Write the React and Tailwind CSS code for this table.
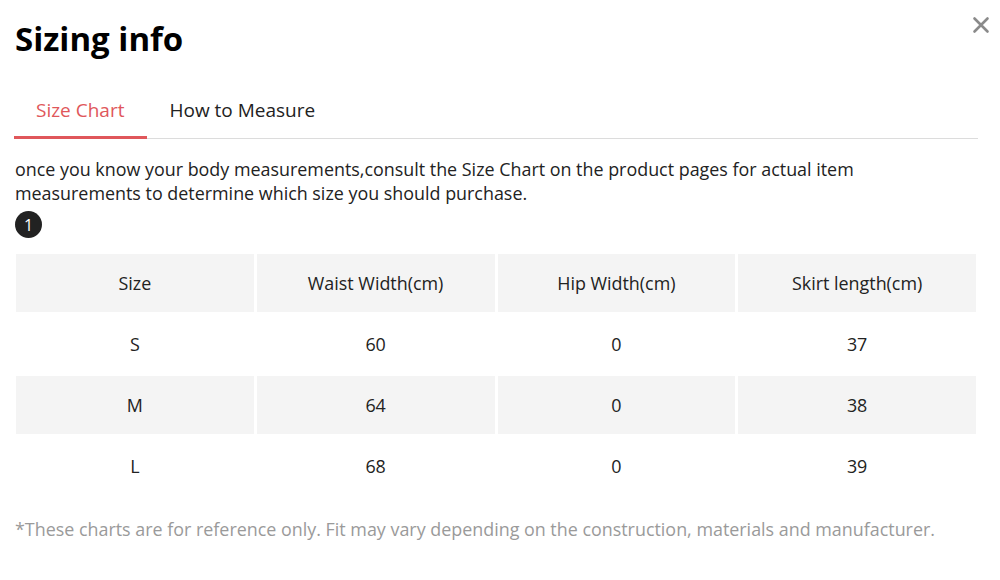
import React, { useState } from "react";

const rows = [
  { size: "S", waist: 60, hip: 0, length: 37 },
  { size: "M", waist: 64, hip: 0, length: 38 },
  { size: "L", waist: 68, hip: 0, length: 39 },
];

const SizingInfo = () => {
  const [tab, setTab] = useState("chart");

  return (
    <div className="relative w-[1000px] h-[580px] bg-white text-[#222] font-['Open_Sans',sans-serif] px-[15px] pt-[16px]">
      <button className="absolute right-[6px] top-[12px] text-[#8a8a8a]">
        <svg width="26" height="26" viewBox="0 0 24 24" fill="none" stroke="currentColor" strokeWidth="2.4" strokeLinecap="round">
          <path d="M6 6l12 12M18 6L6 18" />
        </svg>
      </button>

      <h1 className="text-[33px] font-bold leading-[46px] text-black">Sizing info</h1>

      <div className="mt-[35px] -ml-px flex border-b border-[#dcdcdc] w-[964px]">
        <button
          onClick={() => setTab("chart")}
          className={`pl-[22px] pr-[23px] pb-[13px] text-[19px] leading-[26px] -mb-px border-b-[3px] ${tab === "chart" ? "text-[#e0575b] border-[#e0575b]" : "text-[#222] border-transparent"}`}
        >
          Size Chart
        </button>
        <button
          onClick={() => setTab("measure")}
          className={`px-[22px] pb-[13px] text-[19px] leading-[26px] -mb-px border-b-[3px] ${tab === "measure" ? "text-[#e0575b] border-[#e0575b]" : "text-[#222] border-transparent"}`}
        >
          How to Measure
        </button>
      </div>

      <p className="mt-[18px] text-[17.9px] leading-[24px] text-[#222]">
        once you know your body measurements,consult the Size Chart on the product pages for actual item
        <br />
        measurements to determine which size you should purchase.
      </p>

      <div className="mt-[6px] w-[27px] h-[27px] rounded-full bg-[#222] text-white text-[16px] flex items-center justify-center">
        1
      </div>

      <table className="mt-[13px] -ml-[2px] w-[966px] table-fixed border-separate border-spacing-[3px] text-[17.9px] text-[#222] text-center">
        <thead>
          <tr className="bg-[#f4f4f4]">
            <th className="font-normal h-[58px]">Size</th>
            <th className="font-normal">Waist Width(cm)</th>
            <th className="font-normal">Hip Width(cm)</th>
            <th className="font-normal">Skirt length(cm)</th>
          </tr>
        </thead>
        <tbody>
          {rows.map((r, i) => (
            <tr key={r.size} className={i % 2 === 1 ? "bg-[#f4f4f4]" : "bg-white"}>
              <td className="h-[58px]">{r.size}</td>
              <td>{r.waist}</td>
              <td>{r.hip}</td>
              <td>{r.length}</td>
            </tr>
          ))}
        </tbody>
      </table>

      <p className="mt-[19px] text-[17.9px] leading-[24px] text-[#9a9a9a]">
        *These charts are for reference only. Fit may vary depending on the construction, materials and manufacturer.
      </p>
    </div>
  );
};

export default function App() {
  return <SizingInfo />;
}
